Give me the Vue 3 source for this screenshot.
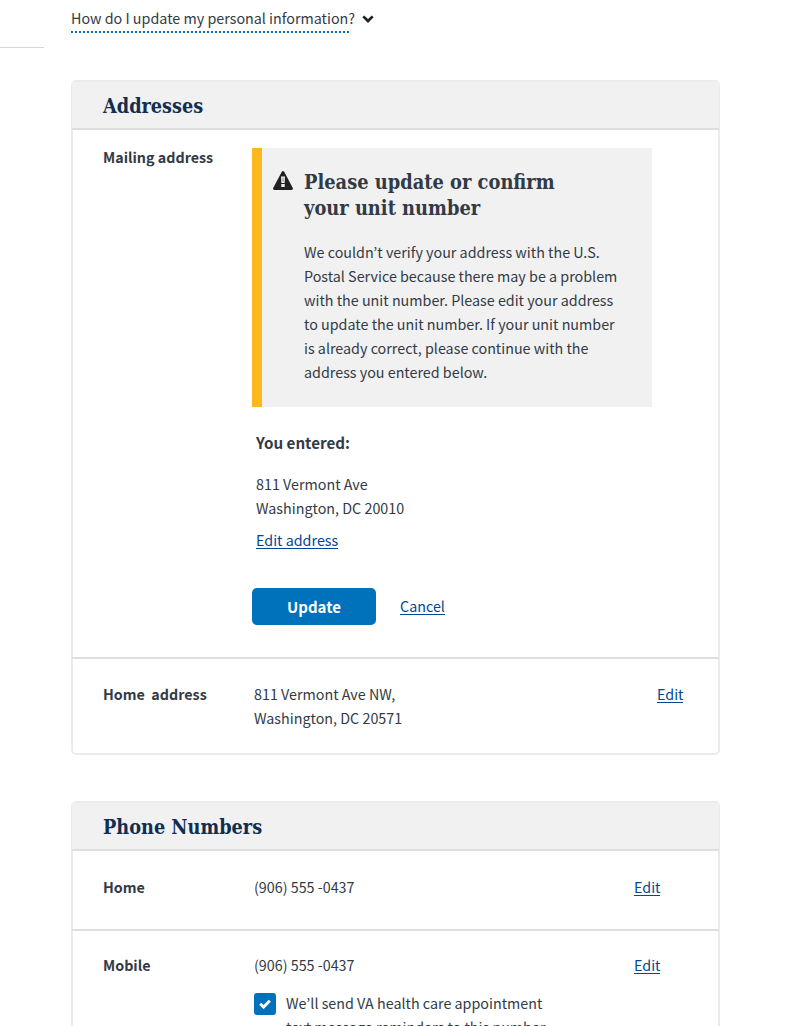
<script setup>
import { ref } from 'vue'

const reminders = ref(true)
</script>

<template>
  <main class="page">
    <div class="rule"></div>
    <button class="faq" type="button">
      <span class="faq-text">How do I update my personal information?</span>
      <svg class="chevron" viewBox="0 0 12 8" width="12" height="8">
        <path d="M1.3 1.4 6 6l4.7-4.6" fill="none" stroke="#212121" stroke-width="2.7" />
      </svg>
    </button>

    <section class="card addresses">
      <h2 class="card-title">Addresses</h2>
      <div class="row mailing">
        <h3 class="label">Mailing address</h3>
        <div class="mailing-body">
          <div class="alert">
            <svg class="warning" viewBox="0 0 20 19" width="20" height="19">
              <path
                d="M8.8.7a1.4 1.4 0 0 1 2.4 0l8.6 16.2c.5.9-.1 2.1-1.2 2.1H1.4C.3 19-.3 17.8.2 16.9Z"
                fill="#212121"
              />
              <path
                d="M8 5.4h4l-.4 6.5H8.4ZM8.3 12.9h3.4v3.2H8.3Z"
                fill="#f1f1f1"
              />
              <path d="M9.5 6.8h1v3.6h-1Z" fill="#888" />
            </svg>
            <div>
              <h3 class="alert-title">Please update or confirm<br />your unit number</h3>
              <p class="alert-text">
                We couldn’t verify your address with the U.S.<br />
                Postal Service because there may be a problem<br />
                with the unit number. Please edit your address<br />
                to update the unit number. If your unit number<br />
                is already correct, please continue with the<br />
                address you entered below.
              </p>
            </div>
          </div>
          <div class="entered">
            <h4 class="entered-title">You entered:</h4>
            <p class="text">811 Vermont Ave<br />Washington, DC 20010</p>
            <a class="link edit-address">Edit address</a>
          </div>
          <div class="actions">
            <button class="update" type="button">Update</button>
            <a class="link">Cancel</a>
          </div>
        </div>
      </div>
      <div class="row home-address">
        <h3 class="label">Home&nbsp; address</h3>
        <p class="text value">811 Vermont Ave NW,<br />Washington, DC 20571</p>
        <a class="link">Edit</a>
      </div>
    </section>

    <section class="card phones">
      <h2 class="card-title">Phone Numbers</h2>
      <div class="row phone">
        <h3 class="label">Home</h3>
        <p class="text value">(906) 555 -0437</p>
        <a class="link">Edit</a>
      </div>
      <div class="row mobile">
        <h3 class="label">Mobile</h3>
        <div class="value">
          <p class="text">(906) 555 -0437</p>
          <label class="reminder">
            <input v-model="reminders" type="checkbox" class="native" />
            <span class="box">
              <svg v-if="reminders" viewBox="0 0 12 10" width="12" height="10">
                <path d="M1.2 4.8 4.6 8.1 10.8 1.7" fill="none" stroke="#fff" stroke-width="2.9" />
              </svg>
            </span>
            <span class="text">We’ll send VA health care appointment<br />text message reminders to this number</span>
          </label>
        </div>
        <a class="link">Edit</a>
      </div>
    </section>
  </main>
</template>

<style>
body {
  background: #fff;
}
</style>

<style scoped>
.page {
  position: relative;
  box-sizing: border-box;
  height: 1026px;
  overflow: hidden;
  padding: 6px 66px 0 71px;
  color: #323a45;
  font-family: "Noto Sans CJK KR", "Source Sans Pro", sans-serif;
  font-size: 14.32px;
  line-height: 24px;
}
h2, h3, h4, p {
  margin: 0;
}
button {
  border: 0;
  padding: 0;
  font: inherit;
  color: inherit;
}
.rule {
  position: absolute;
  left: 0;
  top: 47px;
  width: 44px;
  height: 1px;
  background: #d6d7d9;
}
.faq {
  display: flex;
  align-items: center;
  gap: 7px;
  height: 27px;
  background: none;
}
.faq-text {
  height: 25px;
  background: repeating-linear-gradient(90deg, #0071bb 0 2px, transparent 2px 4px) 0 100% / 279px 2px no-repeat;
  padding-bottom: 2px;
}
.chevron {
  margin-bottom: 1px;
}
.card {
  box-sizing: border-box;
  width: 649px;
  border: 2px solid #ebebeb;
  border-radius: 5px;
}
.addresses {
  height: 675px;
  margin-top: 47px;
}
.phones {
  height: 300px;
  margin-top: 46px;
}
.card-title {
  box-sizing: border-box;
  height: 48px;
  margin: 0 -1px;
  padding-left: 31px;
  background: #f1f1f1;
  border-bottom: 2px solid #dedede;
  color: #112e51;
  font: bold 19.7px/49px "DejaVu Serif Condensed", "DejaVu Serif", serif;
}
.row {
  display: flex;
  align-items: flex-start;
  box-sizing: border-box;
  margin: 0 -1px;
  padding-left: 31px;
}
.label {
  flex: none;
  width: 151px;
  font-size: 14.3px;
  font-weight: bold;
}
.value {
  flex: none;
}
.mailing {
  height: 529px;
  padding-top: 18px;
  border-bottom: 2px solid #dedede;
}
.mailing .label {
  width: 149px;
  margin-top: -3px;
}
.alert {
  display: flex;
  gap: 11px;
  box-sizing: border-box;
  width: 400px;
  height: 259px;
  padding: 21px 0 0 11px;
  border-left: 10px solid #fdb81e;
  background: #f1f1f1;
}
.warning {
  flex: none;
  margin-top: 2px;
}
.alert-title {
  font: bold 19.85px/26px "DejaVu Serif Condensed", "DejaVu Serif", serif;
}
.alert-text {
  margin-top: 19px;
}
.entered {
  padding: 23px 0 0 4px;
}
.entered-title {
  font-size: 15.2px;
  margin-bottom: 18px;
}
.link {
  display: inline-block;
  height: 20px;
  line-height: 24px;
  border-bottom: 1px solid #004795;
  color: #004795;
}
.edit-address {
  margin-top: 8px;
}
.actions {
  display: flex;
  gap: 24px;
  align-items: flex-start;
  margin-top: 36px;
}
.actions .link {
  margin-top: 6px;
}
.update {
  width: 124px;
  height: 37px;
  border-radius: 5px;
  background: #0071bb;
  color: #fff;
  font-size: 15px;
  font-weight: bold;
}
.home-address {
  padding-top: 23px;
}
.home-address .value {
  width: 403px;
}
.phone {
  height: 80px;
  padding-top: 24px;
  border-bottom: 2px solid #dedede;
}
.phones .value {
  width: 380px;
}
.mobile {
  padding-top: 22px;
}
.reminder {
  display: flex;
  gap: 10px;
  margin-top: 14px;
}
.native {
  position: absolute;
  opacity: 0;
}
.box {
  display: grid;
  place-items: center;
  flex: none;
  width: 22px;
  height: 22px;
  margin-top: 2px;
  border-radius: 3px;
  background: #0071bb;
}
</style>
